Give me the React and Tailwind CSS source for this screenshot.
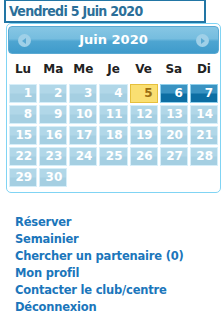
import React from "react";

const days = ["Lu", "Ma", "Me", "Je", "Ve", "Sa", "Di"];
const links = [
  "Réserver",
  "Semainier",
  "Chercher un partenaire (0)",
  "Mon profil",
  "Contacter le club/centre",
  "Déconnexion",
];

function Cell({ d }) {
  if (d === 5) {
    return (
      <div className="h-[19px] border border-[#e6c03c] bg-[#fadf72] text-[#9a6e12] text-right pr-[4px] leading-[17px]">
        {d}
      </div>
    );
  }
  if (d === 6 || d === 7) {
    return (
      <div className="h-[19px] border border-[#8fd0ec] bg-[linear-gradient(#3a93c2_0%,#3a93c2_45%,#0c6ea3_55%,#0c6ea3_100%)] text-white text-right pr-[4px] leading-[17px]">
        {d}
      </div>
    );
  }
  return (
    <div className="h-[19px] border border-[#d6eef9] bg-[linear-gradient(#b1d7e8_0%,#b1d7e8_45%,#a5cfe2_55%,#a5cfe2_100%)] text-white text-right pr-[4px] leading-[17px]">
      {d}
    </div>
  );
}

export default function App() {
  const nums = Array.from({ length: 30 }, (_, i) => i + 1);
  return (
    <div
      className="w-[222px] h-[319px] bg-white overflow-hidden"
      style={{ fontFamily: '"DejaVu Sans", Verdana, sans-serif' }}
    >
      <div className="ml-[4px] w-[202px] h-[23px] border-t border-x-2 border-b-2 border-[#2276a5] pl-[3px] text-[14px] font-bold text-[#2b6f99] leading-[20px] tracking-[-0.7px] font-['DejaVu_Sans_Condensed',_'DejaVu_Sans',_sans-serif]">
        Vendredi 5 Juin 2020
      </div>
      <div className="ml-[6px] w-[215px] border border-[#80d4f4] rounded-[5px] px-[1px] pt-[2px] pb-[5px]">
        <div className="relative h-[28px] rounded-[4px] border border-[#5aa9d2] bg-[linear-gradient(#86c6e4_0%,#76bddf_45%,#4ea5d1_55%,#3f9bcb_100%)] flex items-center justify-center">
          <span className="text-white font-bold text-[13px]">Juin 2020</span>
          <span className="absolute left-[9px] top-[7px] w-[13px] h-[13px] rounded-full bg-[#9fd0e8] flex items-center justify-center">
            <span className="w-0 h-0 border-y-[3px] border-y-transparent border-r-[4px] border-r-[#5aa9d2] mr-[1px]" />
          </span>
          <span className="absolute right-[9px] top-[7px] w-[13px] h-[13px] rounded-full bg-[#9fd0e8] flex items-center justify-center">
            <span className="w-0 h-0 border-y-[3px] border-y-transparent border-l-[4px] border-l-[#5aa9d2] ml-[1px]" />
          </span>
        </div>
        <div className="px-[1px]">
          <div className="grid grid-cols-7 gap-x-[2px] h-[30px] items-end pb-[6px] text-[12px] font-bold text-[#222]">
            {days.map((d) => (
              <div key={d} className="text-center">
                {d}
              </div>
            ))}
          </div>
          <div className="grid grid-cols-7 gap-x-[2px] gap-y-[2px] text-[12px] font-bold">
            {nums.map((d) => (
              <Cell key={d} d={d} />
            ))}
          </div>
        </div>
      </div>
      <div className="mt-[21px] ml-[15px] flex flex-col text-[11.5px] tracking-[-0.2px] font-bold text-[#1b76bb] leading-[17px]">
        {links.map((l) => (
          <a key={l} className="cursor-pointer">
            {l}
          </a>
        ))}
      </div>
    </div>
  );
}
